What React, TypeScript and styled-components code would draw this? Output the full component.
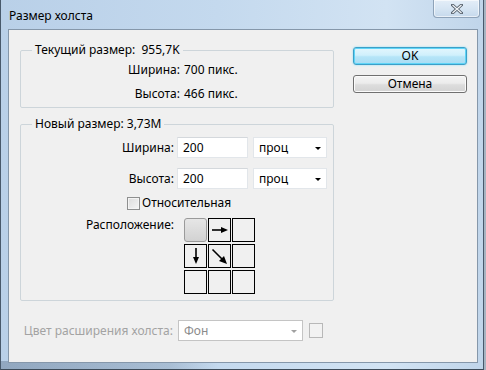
import React from "react";
import styled, { createGlobalStyle } from "styled-components";

const Global = createGlobalStyle`
  html, body { margin: 0; padding: 0; }
  body {
    width: 486px; height: 370px; overflow: hidden;
    background: #a7b4c2;
    font-family: "Noto Sans", "Open Sans", "DejaVu Sans", sans-serif;
    font-size: 12px; color: #000;
  }
`;

const Window = styled.div`
  width: 484px;
  height: 370px;
  box-sizing: border-box;
  display: flex;
  flex-direction: column;
  background:
    linear-gradient(90deg, rgba(70, 90, 115, 0.35) 0%, rgba(70, 90, 115, 0.2) 35%, rgba(255, 255, 255, 0) 45%) bottom / 100% 8px no-repeat,
    linear-gradient(90deg, #b9d0e8 0%, #c4d9ee 45%, #d2e3f3 80%, #c0d5ea 100%);
  border-left: 1px solid #48596b;
  border-right: 1px solid #48596b;
  border-bottom: 1px solid #3d4b59;
  padding: 0 5px 6px 7px;
`;

const TitleBar = styled.div`
  height: 29px;
  display: flex;
  align-items: flex-start;
  justify-content: space-between;
`;

const Title = styled.div`
  padding: 8px 0 0 1px;
  line-height: 16px;
  font-size: 12px;
`;

const CloseButton = styled.div`
  width: 47px;
  height: 18px;
  margin-right: -2px;
  box-sizing: border-box;
  border: 1px solid #8ea3b9;
  border-top: none;
  border-radius: 0 0 4px 4px;
  background: linear-gradient(180deg, #e4eef8 0%, #d6e5f3 50%, #c6d9ec 100%);
  box-shadow: inset 0 0 0 1px rgba(255, 255, 255, 0.6);
  display: flex;
  align-items: center;
  justify-content: center;
`;

const Client = styled.div`
  flex: 1;
  display: flex;
  gap: 19px;
  background: #f0f0f0;
  border: 1px solid #8597aa;
  padding: 12px 10px 0 11px;
  min-height: 0;
`;

const LeftColumn = styled.div`
  width: 314px;
  display: flex;
  flex-direction: column;
`;

const RightColumn = styled.div`
  width: 114px;
  display: flex;
  flex-direction: column;
  gap: 10px;
  padding-top: 5px;
`;

const Group = styled.fieldset<{ $top?: number; $pt: number; $pb: number }>`
  margin: ${(p) => p.$top ?? 0}px 0 0 0;
  padding: ${(p) => p.$pt}px 0 ${(p) => p.$pb}px 0;
  border: 1px solid #cdd5da;
  border-radius: 2px;
  min-width: 0;
`;

const Legend = styled.legend`
  margin-left: 11px;
  padding: 0 3px;
  line-height: 16px;
  font-size: 12px;
`;

const InfoGrid = styled.div`
  display: grid;
  grid-template-columns: 159px auto;
  column-gap: 4px;
  row-gap: 8px;
  line-height: 16px;
`;

const RightLabel = styled.span<{ $disabled?: boolean }>`
  text-align: right;
  white-space: nowrap;
  color: ${(p) => (p.$disabled ? "#a3a3a3" : "#000")};
`;

const Stack = styled.div`
  display: flex;
  flex-direction: column;
`;

const FieldRow = styled.div<{ $mt?: number }>`
  display: flex;
  align-items: center;
  height: 21px;
  margin-top: ${(p) => p.$mt ?? 0}px;
`;

const FieldLabel = styled.span`
  width: 153px;
  margin-right: 3px;
  text-align: right;
  white-space: nowrap;
  line-height: 16px;
`;

const TextBox = styled.div`
  width: 71px;
  height: 21px;
  box-sizing: border-box;
  background: #fff;
  border: 1px solid #e2e6ea;
  border-top-color: #d4d8dc;
  padding-left: 5px;
  line-height: 19px;
`;

const Select = styled.div<{ $width: number; $gap?: number; $disabled?: boolean }>`
  width: ${(p) => p.$width}px;
  height: 21px;
  margin-left: ${(p) => p.$gap ?? 0}px;
  box-sizing: border-box;
  background: #fff;
  border: 1px solid ${(p) => (p.$disabled ? "#c4c4c4" : "#e2e6ea")};
  padding: 0 5px 0 5px;
  display: flex;
  align-items: center;
  justify-content: space-between;
  line-height: 19px;
  color: ${(p) => (p.$disabled ? "#8a8a8a" : "#000")};
`;

const Arrow = styled.span<{ $disabled?: boolean }>`
  width: 0;
  height: 0;
  border-left: 3px solid transparent;
  border-right: 3px solid transparent;
  border-top: 3px solid ${(p) => (p.$disabled ? "#a0a0a0" : "#000")};
  margin-top: 1px;
`;

const CheckRow = styled.label`
  display: flex;
  align-items: center;
  gap: 2px;
  height: 16px;
  margin-top: 6px;
  padding-left: 106px;
  line-height: 16px;
`;

const CheckBox = styled.span`
  width: 13px;
  height: 13px;
  box-sizing: border-box;
  border: 1px solid #8e8f8f;
  background: linear-gradient(135deg, #dcdcdc 0%, #f5f5f5 100%);
  box-shadow: inset 0 0 0 1px #f4f4f4;
`;

const PositionRow = styled.div`
  display: flex;
  align-items: flex-start;
  margin-top: 7px;
`;

const PositionLabel = styled.span`
  width: 153px;
  text-align: right;
  line-height: 16px;
  margin-top: -1px;
`;

const AnchorGrid = styled.div`
  margin-left: 10px;
  display: grid;
  grid-template-columns: repeat(3, 23px);
  grid-template-rows: repeat(3, 24px);
  column-gap: 1px;
  row-gap: 2px;
`;

const AnchorCell = styled.div<{ $selected?: boolean }>`
  box-sizing: border-box;
  border: ${(p) => (p.$selected ? "1px solid #9a9a9a" : "1px solid #000")};
  border-radius: ${(p) => (p.$selected ? "3px" : "0")};
  background: ${(p) =>
    p.$selected ? "linear-gradient(180deg, #e6e6e6 0%, #d2d2d2 100%)" : "#f0f0f0"};
  display: flex;
  align-items: center;
  justify-content: center;
`;

const BottomRow = styled.div`
  display: flex;
  align-items: center;
  margin-top: 19px;
  height: 21px;
`;

const DisabledLabel = styled(RightLabel)`
  width: 153px;
  margin-right: 5px;
  line-height: 16px;
`;

const ColorSwatch = styled.div`
  width: 14px;
  height: 15px;
  margin-left: 6px;
  box-sizing: border-box;
  border: 1px solid #b8b8b8;
  background: #f2f2f2;
`;

const Button = styled.button<{ $primary?: boolean }>`
  width: 114px;
  height: 18px;
  box-sizing: border-box;
  padding: 0;
  font-family: inherit;
  font-size: 12px;
  line-height: 16px;
  color: #000;
  border-radius: 3px;
  border: 1px solid ${(p) => (p.$primary ? "#3c9fc8" : "#707070")};
  background: ${(p) =>
    p.$primary
      ? "linear-gradient(180deg, #e3f6fd 0%, #d0f0fc 45%, #b5e5f8 55%, #a9dcf3 100%)"
      : "linear-gradient(180deg, #f4f4f4 0%, #ececec 45%, #dddddd 55%, #d3d3d3 100%)"};
  box-shadow: ${(p) =>
    p.$primary ? "inset 0 0 0 1px #5fd5f7, 0 0 2px #7fdcf7" : "inset 0 0 0 1px #fbfbfb"};
`;

const RightArrow = () => (
  <svg width="18" height="8" viewBox="0 0 18 8">
    <line x1="1" y1="4" x2="12" y2="4" stroke="#000" strokeWidth="1.6" />
    <polygon points="10,1 17,4 10,7" fill="#000" />
  </svg>
);

const DownArrow = () => (
  <svg width="8" height="18" viewBox="0 0 8 18">
    <line x1="4" y1="1" x2="4" y2="12" stroke="#000" strokeWidth="1.6" />
    <polygon points="1,10 4,17 7,10" fill="#000" />
  </svg>
);

const DiagArrow = () => (
  <svg width="17" height="17" viewBox="0 0 17 17">
    <line x1="1.5" y1="1.5" x2="11" y2="11" stroke="#000" strokeWidth="1.6" />
    <polygon points="8,13 16,16 13,8" fill="#000" />
  </svg>
);

const CloseGlyph = () => (
  <svg width="12" height="10" viewBox="0 0 12 10">
    <path d="M1.5 1 L10.5 9 M10.5 1 L1.5 9" stroke="#55606c" strokeWidth="3" strokeLinecap="square" />
    <path d="M1.5 1 L10.5 9 M10.5 1 L1.5 9" stroke="#f4f7fa" strokeWidth="1.2" />
  </svg>
);

export default function App() {
  return (
    <>
      <Global />
      <Window>
        <TitleBar>
          <Title>Размер холста</Title>
          <CloseButton>
            <CloseGlyph />
          </CloseButton>
        </TitleBar>
        <Client>
          <LeftColumn>
            <Group $pt={4} $pb={5}>
              <Legend>Текущий размер:&nbsp; 955,7K</Legend>
              <InfoGrid>
                <RightLabel>Ширина:</RightLabel>
                <span>700 пикс.</span>
                <RightLabel>Высота:</RightLabel>
                <span>466 пикс.</span>
              </InfoGrid>
            </Group>
            <Group $top={8} $pt={5} $pb={6}>
              <Legend>Новый размер: 3,73M</Legend>
              <Stack>
                <FieldRow>
                  <FieldLabel>Ширина:</FieldLabel>
                  <TextBox>200</TextBox>
                  <Select $width={74} $gap={5}>
                    проц
                    <Arrow />
                  </Select>
                </FieldRow>
                <FieldRow $mt={10}>
                  <FieldLabel>Высота:</FieldLabel>
                  <TextBox>200</TextBox>
                  <Select $width={74} $gap={5}>
                    проц
                    <Arrow />
                  </Select>
                </FieldRow>
                <CheckRow>
                  <CheckBox />
                  Относительная
                </CheckRow>
                <PositionRow>
                  <PositionLabel>Расположение:</PositionLabel>
                  <AnchorGrid>
                    <AnchorCell $selected />
                    <AnchorCell>
                      <RightArrow />
                    </AnchorCell>
                    <AnchorCell />
                    <AnchorCell>
                      <DownArrow />
                    </AnchorCell>
                    <AnchorCell>
                      <DiagArrow />
                    </AnchorCell>
                    <AnchorCell />
                    <AnchorCell />
                    <AnchorCell />
                    <AnchorCell />
                  </AnchorGrid>
                </PositionRow>
              </Stack>
            </Group>
            <BottomRow>
              <DisabledLabel $disabled>Цвет расширения холста:</DisabledLabel>
              <Select $width={125} $disabled>
                Фон
                <Arrow $disabled />
              </Select>
              <ColorSwatch />
            </BottomRow>
          </LeftColumn>
          <RightColumn>
            <Button $primary>OK</Button>
            <Button>Отмена</Button>
          </RightColumn>
        </Client>
      </Window>
    </>
  );
}
